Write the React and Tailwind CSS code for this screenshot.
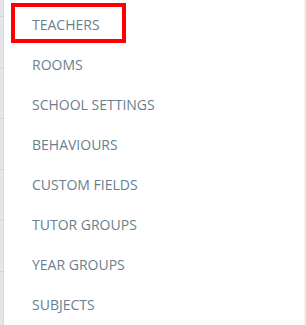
import React from "react";

const items = [
  "TEACHERS",
  "ROOMS",
  "SCHOOL SETTINGS",
  "BEHAVIOURS",
  "CUSTOM FIELDS",
  "TUTOR GROUPS",
  "YEAR GROUPS",
  "SUBJECTS",
];

export default function App() {
  return (
    <div className="flex w-[306px] h-[325px] bg-white overflow-hidden" style={{ fontFamily: '"Open Sans", sans-serif' }}>
      <div className="w-[4px] h-full bg-[#e4e6e7] border-r border-[#d5d8da] flex flex-col">
        <div className="h-[17px] border-b border-[#cfd3d5]" />
        <div className="h-[51px] border-b border-[#cfd3d5]" />
        <div className="h-[51px] border-b border-[#cfd3d5]" />
        <div className="h-[51px] border-b border-[#cfd3d5]" />
        <div className="h-[51px] border-b border-[#cfd3d5]" />
        <div className="h-[51px] border-b border-[#cfd3d5]" />
        <div className="flex-1" />
      </div>
      <div className="relative flex-1 flex flex-col pt-[4px]">
        {items.map((t) => (
          <div key={t} className="h-[40px] flex items-center pl-[28px] text-[14px] text-[#6a7f8e]">
            {t}
          </div>
        ))}
        <div className="absolute left-[7px] top-[3px] w-[115px] h-[40px] border-[4px] border-[#ff0000]" />
      </div>
      <div className="w-[2px] h-full bg-[#efefef]" />
    </div>
  );
}
